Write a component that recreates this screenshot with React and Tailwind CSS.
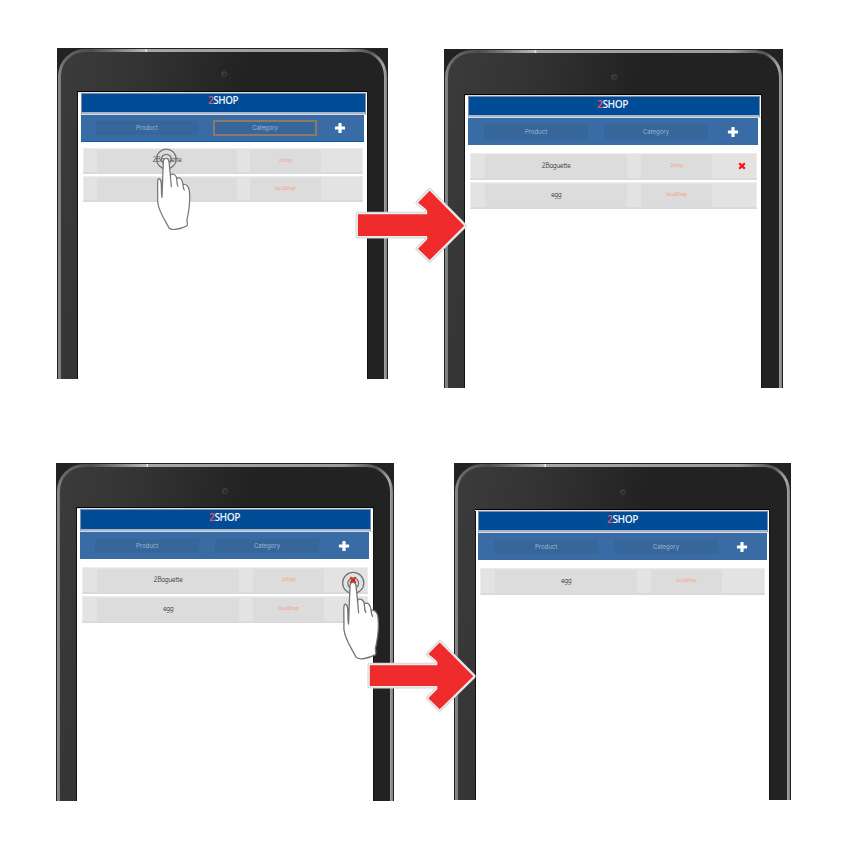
import React from "react";

const devices = {
  a: {
    frame: "w-[331px] h-[331px]",
    top: "h-[39px]",
    camera: "ml-[160px] mt-[19px]",
    screen: "ml-[16px] w-[291px] pl-[3px]",
    header: "w-[285px] h-[21px] text-[9.8px]",
    title: "pl-[126px]",
    nav: "w-[283px] h-[27px] pl-[15px] border-b border-[#0b5da3]",
    product: "w-[102px] h-[14px] text-[5.9px]",
    category: "ml-[15px] w-[104px] h-[16px] text-[5.9px] border-2 border-[#8c7a68]",
    plus: "ml-[17px] size-[12px]",
    list: "ml-[2px] mt-[6px] w-[280px] gap-[2px]",
    row: "h-[26px] pl-[13px]",
    name: "w-[140px] h-[22px]",
    shop: "ml-[13px] w-[71px] h-[22px]",
    items: [
      { name: "2Baguette", shop: "2shop" },
      { name: "", shop: "localShop" },
    ],
  },
  b: {
    frame: "w-[339px] h-[339px]",
    top: "h-[41px]",
    camera: "ml-[163px] mt-[21px]",
    screen: "ml-[16px] w-[298px] pl-[3px]",
    header: "w-[292px] h-[21px] text-[10.1px]",
    title: "pl-[128px]",
    nav: "w-[290px] h-[27px] pl-[16px]",
    product: "w-[104px] h-[14px] text-[6px]",
    category: "ml-[16px] w-[104px] h-[14px] text-[6px]",
    plus: "ml-[19px] size-[12px]",
    list: "ml-[2px] mt-[8px] w-[287px] gap-[2px]",
    row: "h-[27px] pl-[14px]",
    name: "w-[142px] h-[23px]",
    shop: "ml-[14px] w-[71px] h-[23px]",
    items: [
      { name: "2Baguette", shop: "2shop", removable: true },
      { name: "egg", shop: "localShop" },
    ],
  },
  c: {
    frame: "w-[338px] h-[338px]",
    top: "h-[40px]",
    camera: "ml-[162px] mt-[21px]",
    screen: "ml-[16px] w-[298px] pl-[3px]",
    header: "w-[291px] h-[22px] text-[10.1px]",
    title: "pl-[128px]",
    nav: "w-[289px] h-[27px] pl-[15px]",
    product: "w-[104px] h-[14px] text-[6px]",
    category: "ml-[16px] w-[104px] h-[14px] text-[6px]",
    plus: "ml-[19px] size-[12px]",
    list: "ml-[2px] mt-[8px] w-[286px] gap-[2px]",
    row: "h-[27px] pl-[14px]",
    name: "w-[142px] h-[23px]",
    shop: "ml-[14px] w-[71px] h-[23px]",
    items: [
      { name: "2Baguette", shop: "2shop", removable: true },
      { name: "egg", shop: "localShop" },
    ],
  },
  d: {
    frame: "w-[337px] h-[337px]",
    top: "h-[42px]",
    camera: "ml-[162px] mt-[22px]",
    screen: "ml-[17px] w-[295px] pl-[2px]",
    header: "w-[290px] h-[21px] text-[10.1px]",
    title: "pl-[128px]",
    nav: "w-[289px] h-[27px] pl-[16px]",
    product: "w-[104px] h-[14px] text-[6px]",
    category: "ml-[16px] w-[104px] h-[14px] text-[6px]",
    plus: "ml-[18px] size-[12px]",
    list: "ml-[2px] mt-[8px] w-[285px] gap-[2px]",
    row: "h-[27px] pl-[14px]",
    name: "w-[142px] h-[23px]",
    shop: "ml-[14px] w-[71px] h-[23px]",
    items: [{ name: "egg", shop: "localShop" }],
  },
};

function Plus({ className }) {
  return (
    <svg viewBox="0 0 12 12" className={className}>
      <path
        d="M4.4 1.6q0-.7.7-.7h1.8q.7 0 .7.7v2.8h2.8q.7 0 .7.7v1.8q0 .7-.7.7H7.6v2.8q0 .7-.7.7H5.1q-.7 0-.7-.7V7.6H1.6q-.7 0-.7-.7V5.1q0-.7.7-.7h2.8z"
        fill="#fff"
      />
    </svg>
  );
}

function Remove() {
  return (
    <svg viewBox="0 0 8 8" className="size-[8px]">
      <path d="M1.2 1.2 6.8 6.8M6.8 1.2 1.2 6.8" stroke="#fa0f0c" strokeWidth="2.1" />
    </svg>
  );
}

function Row({ d, item }) {
  return (
    <div
      className={`flex items-center border border-b-2 border-[#ececec] border-b-[#dadada] bg-[#e3e3e3] ${d.row}`}
    >
      <div
        className={`flex items-center justify-center bg-[#dcdcdc] text-[7px] tracking-[-0.45px] text-[#444] font-['Delius','Comic_Neue','Open_Sans',sans-serif] ${d.name}`}
      >
        {item.name}
      </div>
      <div
        className={`flex items-center justify-center bg-[#dcdcdc] text-[5px] tracking-[-0.25px] text-[#f5a182] font-['Open_Sans',sans-serif] ${d.shop}`}
      >
        {item.shop}
      </div>
      <div className="flex grow justify-center pl-[15px]">{item.removable && <Remove />}</div>
    </div>
  );
}

function Device({ d, className = "" }) {
  return (
    <div className={`shrink-0 overflow-hidden bg-[#222] px-px pt-px ${d.frame} ${className}`}>
      <div className="h-full rounded-t-[27px] bg-[linear-gradient(90deg,#858a8c_0%,#66696a_2%,#4b4d4d_10%,#b5b7b7_26.4%,#eeeeee_27%,#a5a7a7_27.2%,#9b9d9d_85%,#505354_95%,#a9a9a9_99%,#7d7d7d_100%)] px-[3px] pt-[3px]">
        <div className="h-full rounded-t-[24px] bg-[linear-gradient(100deg,#3b3b3b_0%,#343434_20%,#222_50%,#222_100%)]">
          <div className={`flex items-start ${d.top}`}>
            <div className={`flex size-[6px] items-center justify-center rounded-full bg-[#3d3a42] ${d.camera}`}>
              <div className="size-[3px] rounded-full bg-[#29253c]" />
            </div>
          </div>
          <div
            className={`h-full border-x border-t border-x-[#111] border-t-black bg-white ${d.screen}`}
          >
            <div className="-ml-[3px] h-px bg-[#ddd]" />
            <div
              className={`flex items-center border border-b-2 border-[#7a8cad] border-b-[#aab4c6] bg-[#004c97] font-semibold leading-none text-[#edf2fa] font-['Open_Sans',sans-serif] ${d.header}`}
            >
              <div className={`-mt-[4px] tracking-[-0.4px] ${d.title}`}>
                <span className="text-[#e5546a]">2</span>SHOP
              </div>
            </div>
            <div className="h-px bg-[#d5dbe5]" />
            <div className={`flex items-center bg-[#396ca5] text-[#9fb4d0] font-['Inter',sans-serif] ${d.nav}`}>
              <div className={`flex items-center justify-center bg-[#37669b] ${d.product}`}>Product</div>
              <div className={`flex items-center justify-center bg-[#37669b] ${d.category}`}>Category</div>
              <Plus className={d.plus} />
            </div>
            <div className={`flex flex-col ${d.list}`}>
              {d.items.map((item, i) => (
                <Row key={i} d={d} item={item} />
              ))}
            </div>
          </div>
        </div>
      </div>
    </div>
  );
}

function Arrow({ className }) {
  const shape = "M5 28.3H74.2Q76 25 72 22L65.3 16.7 77 4.7 111.7 39.7 77 74 65.3 62.7 72 56Q76 53 74.2 50H5Z";
  return (
    <svg viewBox="0 0 116 79" preserveAspectRatio="none" className={className}>
      <path d={shape} fill="none" stroke="#d6d8da" strokeWidth="5" strokeLinejoin="round" />
      <path d={shape} fill="#f02b2b" stroke="#ececee" strokeWidth="3" strokeLinejoin="round" />
      <path d={shape} fill="#f02b2b" />
    </svg>
  );
}

function Hand({ className }) {
  return (
    <svg viewBox="255 20 110 255" className={className} fill="none" stroke="#747474" strokeWidth="3.6" strokeLinejoin="round" strokeLinecap="round">
      <circle cx="289" cy="56" r="29.5" />
      <circle cx="289" cy="57" r="15" />
      <path
        fill="#fff"
        d="M276 171C271 148 279 117 267 115C260 115 264 140 263 185C266 214 286 241 297 263C305 272 333 266 351 256C355 249 347 241 353 229C358 204 361 177 358 152C357 140 349 130 339 132C337 117 330 109 320 114C318 103 309 98 301 104L297 65C296 51 280 51 280 65Z"
      />
      <path d="M301 104 304 139M320 114C321 121 319 129 324 138M339 132C340 139 339 144 343 149" />
    </svg>
  );
}

export default function App() {
  return (
    <main className="relative h-[844px] w-[843px] overflow-hidden bg-white pt-[48px]">
      <div className="flex items-start pl-[57px]">
        <Device d={devices.a} />
        <Device d={devices.b} className="ml-[56px] mt-px" />
      </div>
      <div className="mt-[75px] flex items-start pl-[56px]">
        <Device d={devices.c} />
        <Device d={devices.d} className="ml-[60px]" />
      </div>
      <Hand className="absolute left-[154.7px] top-[146.7px] h-[85px] w-[36.7px]" />
      <Arrow className="absolute left-[353.3px] top-[186px] h-[79px] w-[115.5px]" />
      <Hand className="absolute left-[341.1px] top-[569.8px] h-[91.5px] w-[39.5px]" />
      <Arrow className="absolute left-[365.3px] top-[638px] h-[76px] w-[112.5px]" />
    </main>
  );
}
